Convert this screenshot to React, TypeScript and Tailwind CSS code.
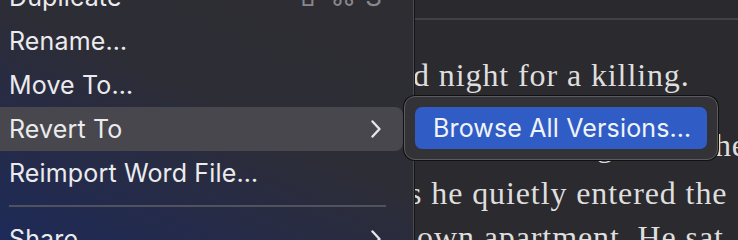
import { ReactNode } from "react";

const menuFont = { fontFamily: "Inter, 'Noto Sans', sans-serif" };
const docFont = { fontFamily: "'Liberation Serif', 'DejaVu Serif', serif" };

function Chevron() {
    return (
        <svg width="12" height="20" viewBox="0 0 12 20" fill="none" className="text-[#e6e6e9]">
            <path d="M2.5 2.5 L9.5 10 L2.5 17.5" stroke="currentColor" strokeWidth="2.4" strokeLinecap="round" strokeLinejoin="round" />
        </svg>
    );
}

function MenuRow({ label, active, submenu, shortcut }: { label: string; active?: boolean; submenu?: boolean; shortcut?: ReactNode }) {
    return (
        <div
            className={`-ml-3 mr-[10px] flex h-[44px] shrink-0 items-center justify-between rounded-lg pl-[21px] pr-[21px] ${active ? "bg-[#48474d]" : ""}`}
        >
            <span className="text-[25px] leading-none tracking-[0.15px] text-[#ebebee]">{label}</span>
            {submenu && <Chevron />}
            {shortcut}
        </div>
    );
}

export default function App() {
    return (
        <main className="relative h-[240px] w-[738px] overflow-hidden bg-[#2b2a2f]">
            <div className="flex h-full">
                {/* context menu */}
                <div
                    className="flex w-[414px] shrink-0 flex-col border-r border-[#4b4a4f] bg-[linear-gradient(25deg,#1d2a58_0%,#262b47_28%,#2d2d36_55%,#2e2d32_100%)]"
                    style={menuFont}
                >
                    <div className="-mt-[25px] flex flex-col">
                        <MenuRow
                            label="Duplicate"
                            shortcut={
                                <span className="flex items-center gap-[9px] text-[26px] leading-none text-[#88878d]">
                                    <span>⇧</span>
                                    <span>⌘</span>
                                    <span>S</span>
                                </span>
                            }
                        />
                        <MenuRow label="Rename…" />
                        <MenuRow label="Move To…" />
                        <MenuRow label="Revert To" active submenu />
                        <MenuRow label="Reimport Word File…" />
                        <div className="flex h-[22px] items-center pl-[9px] pr-[27px]">
                            <div className="h-[2px] w-full bg-[#50535d]" />
                        </div>
                        <MenuRow label="Share" submenu />
                    </div>
                </div>

                {/* document */}
                <div className="flex min-w-0 flex-1 flex-col overflow-hidden border-l border-[#151518]" style={docFont}>
                    <div className="h-[20px] shrink-0 border-b-2 border-[#424246] bg-[#2a292d]" />
                    <div className="flex flex-col whitespace-nowrap text-[32px] tracking-[0.9px] text-[#dedede]">
                        <p className="-ml-[2px] mt-[33px] leading-[44px]">d night for a killing.</p>
                        <p className="ml-[10px] mt-[26px] leading-[44px]">nk was a thug. Now the</p>
                        <p className="-ml-[6px] mt-[4px] leading-[44px]">s he quietly entered the</p>
                        <p className="ml-[2px] leading-[44px]">own apartment. He sat</p>
                    </div>
                </div>
            </div>

            {/* submenu */}
            <div
                className="absolute left-[404px] top-[96px] w-[314px] rounded-[11px] border border-[#5c5b61] bg-[#333237] p-[10px] shadow-[0_0_0_1px_#111114]"
                style={menuFont}
            >
                <div className="flex h-[42px] items-center rounded-[7px] bg-[#2f5dc5] pl-[18px]">
                    <span className="text-[25px] leading-none tracking-[0.15px] text-[#f1f3fa]">Browse All Versions…</span>
                </div>
            </div>
        </main>
    );
}
